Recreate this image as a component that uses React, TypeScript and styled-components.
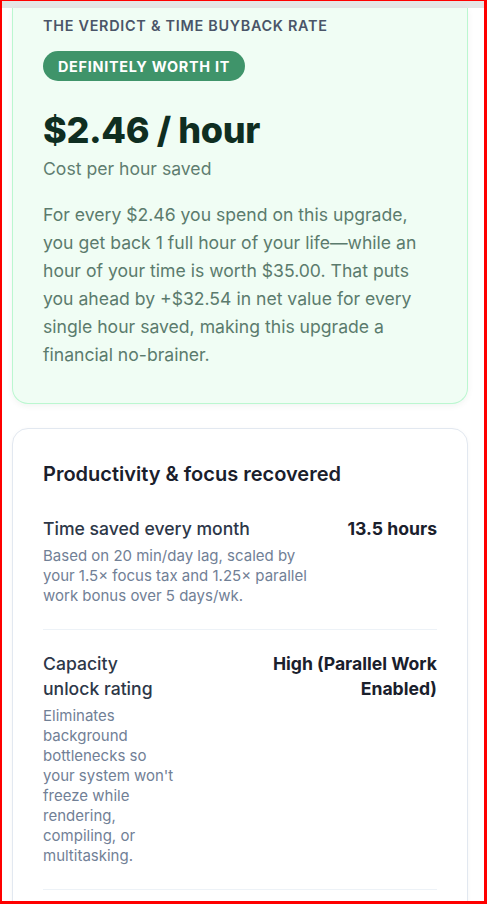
import React from "react";
import styled, { createGlobalStyle } from "styled-components";

const GlobalStyle = createGlobalStyle`
  html, body {
    margin: 0;
    padding: 0;
    background: #ffffff;
  }
  body {
    font-family: Inter, "Noto Sans", Arial, sans-serif;
    -webkit-font-smoothing: antialiased;
  }
  * {
    box-sizing: border-box;
  }
`;

const Frame = styled.div`
  height: 904px;
  overflow: hidden;
  display: flex;
  flex-direction: column;
  border-style: solid;
  border-color: #ff0000;
  border-width: 1px 3px 3px 2px;
`;

const TopStrip = styled.div`
  flex-shrink: 0;
  height: 7px;
  background: #e5e5e5;
`;

const Column = styled.div`
  display: flex;
  flex-direction: column;
  gap: 24px;
  padding: 0 16px 0 10px;
`;

const VerdictCard = styled.section`
  display: flex;
  flex-direction: column;
  align-items: flex-start;
  background: #f0fdf4;
  border: 1px solid #bbf7d0;
  border-top: none;
  border-radius: 0 0 16px 16px;
  padding: 8px 30px 34px;
  box-shadow: 0 2px 6px rgba(15, 60, 35, 0.06);
`;

const Eyebrow = styled.div`
  font-size: 14.4px;
  font-weight: 600;
  line-height: 20px;
  letter-spacing: 0.05em;
  text-transform: uppercase;
  color: #4a5568;
  margin-bottom: 15px;
`;

const Badge = styled.span`
  display: inline-flex;
  align-items: center;
  height: 30px;
  padding: 0 15px;
  border-radius: 999px;
  background: #3f946a;
  color: #ffffff;
  font-size: 14.4px;
  font-weight: 700;
  letter-spacing: 0.05em;
  text-transform: uppercase;
`;

const Price = styled.div`
  margin-top: 27px;
  font-size: 36px;
  font-weight: 800;
  line-height: 44px;
  letter-spacing: -0.01em;
  color: #0f2e21;
`;

const PriceCaption = styled.div`
  margin-top: 5px;
  font-size: 17.6px;
  line-height: 24px;
  color: #5f7d70;
`;

const Summary = styled.p`
  margin: 20px 0 0;
  font-size: 17.6px;
  line-height: 28px;
  color: #5b7b6d;
`;

const Panel = styled.section`
  background: #ffffff;
  border: 1px solid #e2e8f0;
  border-radius: 16px;
  padding: 32px 30px 32px;
  box-shadow: 0 1px 4px rgba(15, 23, 42, 0.04);
`;

const PanelTitle = styled.h3`
  margin: 0 0 8px;
  font-size: 20px;
  font-weight: 600;
  line-height: 26px;
  color: #1a202c;
`;

const MetricRow = styled.div`
  display: flex;
  justify-content: space-between;
  align-items: flex-start;
  gap: 26px;
  padding: 21px 0 23px;
  border-bottom: 1px solid #edf2f7;
`;

const MetricText = styled.div`
  flex: 1;
  min-width: 0;
`;

const MetricLabel = styled.div`
  font-size: 17.6px;
  font-weight: 500;
  line-height: 25px;
  color: #2d3748;
`;

const MetricNote = styled.div`
  margin-top: 5px;
  font-size: 15px;
  line-height: 20px;
  color: #718096;
`;

const MetricValue = styled.div`
  flex-shrink: 0;
  max-width: 60%;
  text-align: right;
  font-size: 17.6px;
  font-weight: 700;
  line-height: 25px;
  color: #1a202c;
`;

const metrics = [
  {
    label: "Time saved every month",
    note: "Based on 20 min/day lag, scaled by your 1.5× focus tax and 1.25× parallel work bonus over 5 days/wk.",
    value: "13.5 hours",
  },
  {
    label: "Capacity unlock rating",
    note: "Eliminates background bottlenecks so your system won't freeze while rendering, compiling, or multitasking.",
    value: "High (Parallel Work Enabled)",
  },
];

export default function App() {
  return (
    <>
      <GlobalStyle />
      <Frame>
        <TopStrip />
        <Column>
          <VerdictCard>
            <Eyebrow>The Verdict &amp; Time Buyback Rate</Eyebrow>
            <Badge>Definitely worth it</Badge>
            <Price>$2.46 / hour</Price>
            <PriceCaption>Cost per hour saved</PriceCaption>
            <Summary>
              For every $2.46 you spend on this upgrade, you get back 1 full hour of your
              life—while an hour of your time is worth $35.00. That puts you ahead by
              +$32.54 in net value for every single hour saved, making this upgrade a
              financial no-brainer.
            </Summary>
          </VerdictCard>

          <Panel>
            <PanelTitle>Productivity &amp; focus recovered</PanelTitle>
            {metrics.map((m) => (
              <MetricRow key={m.label}>
                <MetricText>
                  <MetricLabel>{m.label}</MetricLabel>
                  <MetricNote>{m.note}</MetricNote>
                </MetricText>
                <MetricValue>{m.value}</MetricValue>
              </MetricRow>
            ))}
          </Panel>
        </Column>
      </Frame>
    </>
  );
}
